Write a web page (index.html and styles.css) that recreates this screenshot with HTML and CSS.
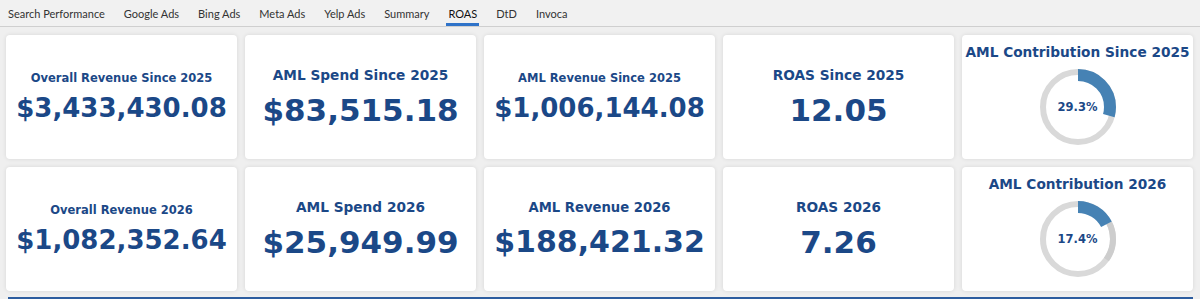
FILE: index.html
```html
<!DOCTYPE html>
<html lang="en">
<head>
    <meta charset="UTF-8">
    <meta name="viewport" content="width=device-width, initial-scale=1.0">
    <title>ROAS</title>
    <link rel="stylesheet" href="styles.css">
</head>
<body>
    <!-- Pestañas -->
    <nav class="tabs">
        <a class="tab">Search Performance</a>
        <a class="tab">Google Ads</a>
        <a class="tab">Bing Ads</a>
        <a class="tab">Meta Ads</a>
        <a class="tab">Yelp Ads</a>
        <a class="tab">Summary</a>
        <a class="tab active">ROAS</a>
        <a class="tab">DtD</a>
        <a class="tab">Invoca</a>
    </nav>

    <div class="kpi-grid">
        <!-- Fila 2025 -->
        <div class="card">
            <div class="card-title small">Overall Revenue Since 2025</div>
            <div class="card-value long">$3,433,430.08</div>
        </div>
        <div class="card">
            <div class="card-title">AML Spend Since 2025</div>
            <div class="card-value">$83,515.18</div>
        </div>
        <div class="card">
            <div class="card-title small">AML Revenue Since 2025</div>
            <div class="card-value long">$1,006,144.08</div>
        </div>
        <div class="card">
            <div class="card-title">ROAS Since 2025</div>
            <div class="card-value">12.05</div>
        </div>
        <div class="card donut-card">
            <div class="card-title">AML Contribution Since 2025</div>
            <div class="donut">
                <svg viewBox="0 0 80 80" width="80" height="80">
                    <circle cx="40" cy="40" r="35" fill="none" stroke="#d9d9d9" stroke-width="6"/>
                    <circle cx="40" cy="40" r="32" fill="none" stroke="#4682b4" stroke-width="12"
                            stroke-dasharray="58.91 201.06" transform="rotate(-90 40 40)"/>
                </svg>
                <span class="donut-label">29.3%</span>
            </div>
        </div>

        <!-- Fila 2026 -->
        <div class="card">
            <div class="card-title small">Overall Revenue 2026</div>
            <div class="card-value long">$1,082,352.64</div>
        </div>
        <div class="card">
            <div class="card-title">AML Spend 2026</div>
            <div class="card-value">$25,949.99</div>
        </div>
        <div class="card">
            <div class="card-title medium">AML Revenue 2026</div>
            <div class="card-value mid">$188,421.32</div>
        </div>
        <div class="card">
            <div class="card-title">ROAS 2026</div>
            <div class="card-value">7.26</div>
        </div>
        <div class="card donut-card">
            <div class="card-title">AML Contribution 2026</div>
            <div class="donut">
                <svg viewBox="0 0 80 80" width="80" height="80">
                    <circle cx="40" cy="40" r="35" fill="none" stroke="#d9d9d9" stroke-width="6"/>
                    <circle cx="40" cy="40" r="35" fill="none" stroke="#cdcdcd" stroke-width="6"
                            stroke-dasharray="0 38.26 38.5 219.91" transform="rotate(-90 40 40)"/>
                    <circle cx="40" cy="40" r="32" fill="none" stroke="#4682b4" stroke-width="12"
                            stroke-dasharray="34.98 201.06" transform="rotate(-90 40 40)"/>
                </svg>
                <span class="donut-label">17.4%</span>
            </div>
        </div>
    </div>

    <div class="next-panel"></div>
</body>
</html>
```

FILE: styles.css
```css
* {
    margin: 0;
    padding: 0;
    box-sizing: border-box;
}

body {
    font-family: 'DejaVu Sans', Verdana, sans-serif;
    background: #efefef;
    color: #1b4887;
    overflow: hidden;
}

.tabs {
    display: flex;
    gap: 15px;
    height: 27px;
    padding-left: 6px;
    border-bottom: 1px solid #cfcfcf;
    background: #f1f1f1;
}

.tab {
    position: relative;
    padding: 0 2px;
    font-family: 'Lato', 'Liberation Sans', sans-serif;
    font-size: 11px;
    line-height: 27px;
    color: #333;
    cursor: pointer;
}

.tab.active {
    color: #111;
}

.tab.active::after {
    content: '';
    position: absolute;
    left: 0;
    right: 0;
    bottom: 0;
    height: 3px;
    background: #2f73c9;
}

.kpi-grid {
    display: grid;
    grid-template-columns: repeat(5, 1fr);
    grid-auto-rows: 124px;
    gap: 8px;
    padding: 8px 7px 0 6px;
}

.card {
    background: white;
    border-radius: 4px;
    box-shadow: 0 0 4px rgba(0, 0, 0, 0.10);
    display: flex;
    flex-direction: column;
    align-items: center;
    justify-content: center;
    padding-top: 2px;
    text-align: center;
}

.card-title {
    font-weight: bold;
    font-size: 13.7px;
    line-height: 1.2;
    white-space: nowrap;
}

.card-title.medium {
    font-size: 13.2px;
}

.card-title.small {
    font-size: 11.5px;
}

.card-value {
    font-weight: bold;
    font-size: 31px;
    line-height: 1.2;
    margin-top: 0.27em;
    white-space: nowrap;
}

.card-value.mid {
    font-size: 30px;
}

.card-value.long {
    font-size: 26px;
}

.donut-card {
    justify-content: flex-start;
    padding-top: 9px;
}

.donut {
    position: relative;
    width: 80px;
    height: 80px;
    margin-top: 7px;
}

.donut svg {
    display: block;
}

.donut-label {
    position: absolute;
    inset: 0;
    display: flex;
    align-items: center;
    justify-content: center;
    font-size: 11.5px;
    font-weight: bold;
    color: #1b4887;
}

.next-panel {
    margin: 6px 7px 0 8px;
    border-top: 2px solid #2d5d9f;
}
```
